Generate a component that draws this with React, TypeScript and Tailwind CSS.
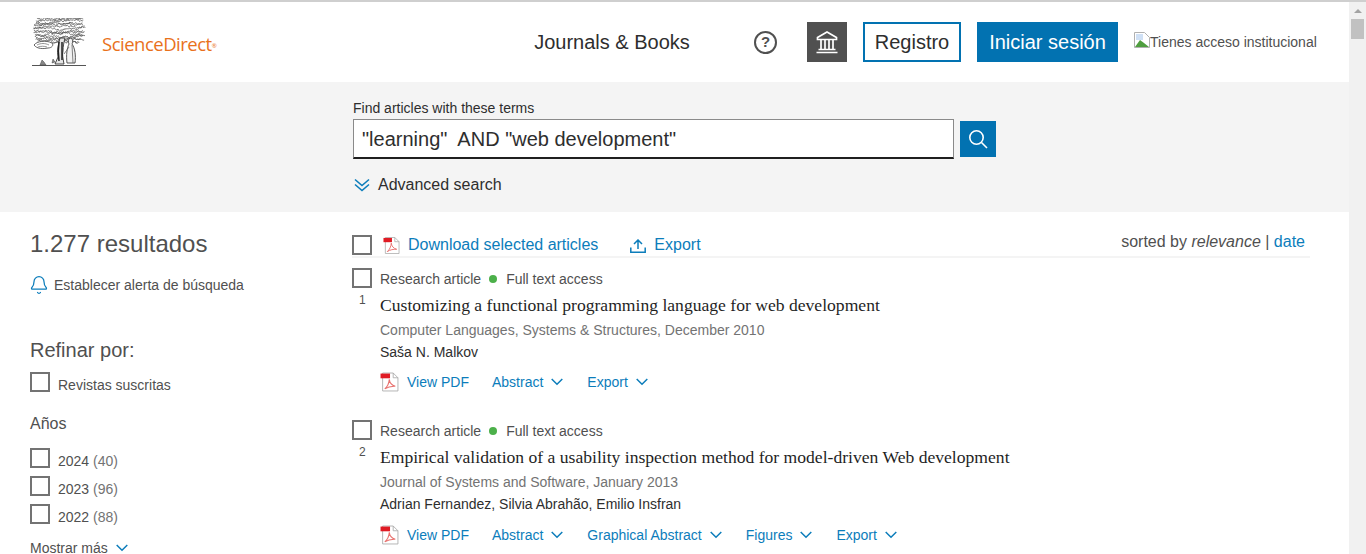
import React from "react";
import { Bell } from "lucide-react";

const sans = "font-['Liberation_Sans',Arial,sans-serif]";

function Box({ className = "" }: { className?: string }) {
  return <span className={`block w-5 h-5 border-2 border-[#737373] bg-white shrink-0 ${className}`} />;
}

function Chevron({ className = "" }: { className?: string }) {
  return (
    <svg width="12" height="8" viewBox="0 0 12 8" fill="none" stroke="#0c7dbb" strokeWidth="1.5" className={`shrink-0 ${className}`}>
      <path d="M.7 1 6 6.300 11.300 1" />
    </svg>
  );
}

function PdfIcon({ w = 18, h = 18 }: { w?: number; h?: number }) {
  return (
    <svg width={w} height={h} viewBox="0 0 18 18" className="shrink-0">
      <path d="M2.500.500h10l4.500 4.500v12.500H2.500z" fill="#fff" stroke="#a8a8a8" strokeWidth="0.8" />
      <path d="M12.500.500v4.500h4.500" fill="none" stroke="#a8a8a8" strokeWidth="0.8" />
      <rect x="0.5" y="1" width="9" height="4.500" fill="#e01b24" />
      <path d="M4.500 15.500c2.500-2 4-5.500 4.300-9 .3 3 2 5.500 5.700 6.500-3.500-.2-7 .5-10 2.500z" fill="none" stroke="#e8716e" strokeWidth="1" />
    </svg>
  );
}

function Tree() {
  const rows: React.ReactNode[] = [];
  let seed = 7;
  const rnd = () => {
    seed = (seed * 9301 + 49297) % 233280;
    return seed / 233280;
  };
  for (let y = 1; y < 28; y += 1.7) {
    const t = Math.abs(y - 12) / 16;
    const inset = Math.max(0, t * t * 7);
    let x = 1 + inset + rnd() * 1.5;
    const end = 52 - inset - rnd() * 1.5;
    let d = `M${x.toFixed(1)} ${y.toFixed(1)}`;
    while (x < end) {
      const step = 1 + rnd() * 1.4;
      const a = (rnd() - 0.5) * 5;
      d += `q${(step / 2).toFixed(1)} ${a.toFixed(1)} ${step.toFixed(1)} ${((rnd() - 0.5) * 1.4).toFixed(1)}`;
      x += step;
    }
    rows.push(<path key={y} d={d} fill="none" stroke="#555" strokeWidth="0.75" />);
  }
  return (
    <svg width="54" height="49" viewBox="0 0 54 49" className="shrink-0">
      {rows}
      <path d="M2 27c3-4 12-5 18-2 2 2 0 5-4 5-5 1-11 1-14-3z" fill="#fff" stroke="#555" strokeWidth="0.9" />
      <path d="M5 27c4-2 8-2 12 0M6 29c3-1 6-1 9 0" fill="none" stroke="#666" strokeWidth="0.7" />
      <path d="M28 20c-2 7-3 13-2 19l-3 7h9c-1-6-2-9-1-13 0-5 1-9 2-13z" fill="#e4e4e4" stroke="#333" strokeWidth="0.9" />
      <path d="M27 24c-1 6-1 12 0 19M30 24v18" stroke="#222" strokeWidth="1.5" fill="none" />
      <path d="M38 20c3 0 3 4 2 6 3 4 4 12 3 19h-8c-1-8 0-15 2-19-1-2-1-5 1-6z" fill="#f2f2f2" stroke="#444" strokeWidth="0.9" />
      <path d="M40 27l1 18M37 29l-5 7" stroke="#666" strokeWidth="0.8" fill="none" />
      <path d="M0 47.500h54" stroke="#555" strokeWidth="1" />
      <path d="M8 47l2-5 2 2 2 3zM20 45l1-4 2 3z" fill="#888" stroke="#444" strokeWidth="0.5" />
    </svg>
  );
}

function Action({ label }: { label: string }) {
  return (
    <span className="flex items-center gap-2 mr-6">
      <span>{label}</span>
      <Chevron />
    </span>
  );
}

function Article({ n, title, source, authors, actions, actionGap }: { n: number; title: string; source: string; authors: string; actions: string[]; actionGap: string }) {
  return (
    <div className="flex">
      <div className="w-7 shrink-0 flex flex-col items-start">
        <Box />
        <span className="text-[12px] leading-[14px] text-[#505050] ml-[7px] mt-[5px]">{n}</span>
      </div>
      <div className="min-w-0">
        <div className="flex items-center text-[14px] leading-[20px] text-[#505050] pt-[1px]">
          <span>Research article</span>
          <span className="w-2 h-2 rounded-full bg-[#4cb04a] ml-2 mr-[9px]" />
          <span>Full text access</span>
        </div>
        <div className="font-['Liberation_Serif',serif] text-[17.6px] leading-[24px] text-[#1f1f1f] mt-[4px] whitespace-nowrap">{title}</div>
        <div className="text-[14px] leading-[20px] text-[#737373] mt-[3px]">{source}</div>
        <div className="text-[14px] leading-[20px] text-[#2e2e2e] mt-[2px]">{authors}</div>
        <div className={`flex items-center text-[14px] text-[#0c7dbb] leading-[20px] ${actionGap}`}>
          <span className="flex items-center gap-2 mr-[23px]"><PdfIcon w={19} h={20} /><span>View PDF</span></span>
          {actions.map((a) => <Action key={a} label={a} />)}
        </div>
      </div>
    </div>
  );
}

function Year({ label, count }: { label: string; count: string }) {
  return (
    <div className="flex items-start h-7">
      <Box />
      <span className="text-[14px] leading-[20px] text-[#505050] ml-2 mt-[3px]">{label} <span className="text-[#737373]">({count})</span></span>
    </div>
  );
}

export default function App() {
  return (
    <div className={`w-[1366px] h-[554px] overflow-hidden bg-white border-t-2 border-[#cfcfcf] flex ${sans}`}>
      <div className="w-[1349px] shrink-0">
        <header className="h-[80px] flex items-center pl-[32px]">
          <Tree />
          <span className="block w-[116px] ml-4 mt-1 font-['Open_Sans',sans-serif] text-[#e9711c] text-[18.5px] tracking-[-0.5px] whitespace-nowrap">ScienceDirect<sup className="text-[6px]">®</sup></span>
          <span className="text-[20px] text-[#2e2e2e] ml-[316px] w-[156px] text-center whitespace-nowrap">Journals &amp; Books</span>
          <span className="ml-[64px] w-[23px] h-[23px] rounded-full border-2 border-[#505050] flex items-center justify-center text-[15px] font-bold text-[#505050]">?</span>
          <span className="ml-[30px] w-[40px] h-[40px] bg-[#505050] flex items-center justify-center">
            <svg width="24" height="24" viewBox="0 0 24 24" fill="none" stroke="#fff" strokeWidth="1.7">
              <path d="M12 2 2.500 7.500v2h19v-2zM3.500 19.500h17M1.500 22.500h21M6 10v9M10 10v9M14 10v9M18 10v9" />
            </svg>
          </span>
          <span className="ml-4 w-[98px] h-[40px] border-2 border-[#0272b1] flex items-center justify-center text-[20px] text-[#2e2e2e]">Registro</span>
          <span className="ml-4 w-[141px] h-[40px] bg-[#0272b1] flex items-center justify-center text-[20px] text-white">Iniciar sesión</span>
          <span className="ml-4 flex items-center text-[14px] text-[#505050] whitespace-nowrap">
            <svg width="16" height="16" viewBox="0 0 16 16" className="shrink-0 -mt-[5px]">
              <path d="M.5.500h10l5 5v10H.5z" fill="#fff" stroke="#b0b0b0" />
              <path d="M2 2h7v6H2z" fill="#cfe0f5" />
              <path d="M1 15l5-7 4 3 5 4z" fill="#4f9e3f" />
            </svg>
            Tienes acceso institucional
          </span>
        </header>
        <section className="h-[130px] bg-[#f4f4f4] pl-[353px] pt-[18px]">
          <div className="text-[14px] leading-[16px] text-[#2e2e2e]">Find articles with these terms</div>
          <div className="flex items-start mt-[3px]">
            <div className="w-[601px] h-[40px] bg-white border border-[#8a8a8a] border-b-2 border-b-[#1f1f1f] pl-[8px] flex items-center text-[20px] text-[#2e2e2e] whitespace-pre">"learning"  AND "web development"</div>
            <span className="w-9 h-9 ml-[6px] mt-[2px] bg-[#0272b1] flex items-center justify-center">
              <svg width="20" height="20" viewBox="0 0 20 20" fill="none" stroke="#fff" strokeWidth="1.6"><circle cx="8.500" cy="8.500" r="6.700" /><path d="M13.500 13.500 19 19" /></svg>
            </span>
          </div>
          <div className="flex items-center mt-[14px] text-[16px] text-[#2e2e2e]">
            <svg width="16" height="14" viewBox="0 0 16 14" fill="none" stroke="#0c7dbb" strokeWidth="1.6" className="shrink-0 ml-[1px]">
              <path d="M1 1.500 8 7.500l7-6M1 6.500l7 6 7-6" />
            </svg>
            <span className="ml-[8px]">Advanced search</span>
          </div>
        </section>
        <div className="flex pl-[30px]">
          <aside className="w-[322px] shrink-0 pt-[18px]">
            <div className="text-[24px] leading-[28px] text-[#505050]">1.277 resultados</div>
            <div className="flex items-center mt-[17px] text-[14px] leading-[20px] text-[#505050]">
              <Bell size={20} color="#0c7dbb" strokeWidth={1.5} className="-ml-[1px]" />
              <span className="ml-[5px]">Establecer alerta de búsqueda</span>
            </div>
            <div className="text-[20px] leading-[24px] text-[#505050] mt-[43px]">Refinar por:</div>
            <div className="flex items-start mt-[10px] h-7">
              <Box />
              <span className="text-[14px] leading-[20px] text-[#505050] ml-2 mt-[3px]">Revistas suscritas</span>
            </div>
            <div className="text-[16px] leading-[20px] text-[#505050] mt-[14px] mb-[14px]">Años</div>
            <Year label="2024" count="40" />
            <Year label="2023" count="96" />
            <Year label="2022" count="88" />
            <div className="flex items-center gap-2 mt-[6px] text-[14px] leading-[20px] text-[#505050]">Mostrar más <Chevron /></div>
          </aside>
          <main className="w-[958px] shrink-0 pt-[22px]">
            <div className="flex items-center border-b-2 border-[#f4f4f4] h-[24px]">
              <Box className="-mt-[1px]" />
              <span className="ml-[11px]"><PdfIcon w={17} h={17} /></span>
              <span className="ml-[8px] text-[16px] text-[#0c7dbb]">Download selected articles</span>
              <svg width="16" height="14" viewBox="0 0 16 14" fill="none" stroke="#0c7dbb" strokeWidth="1.5" className="shrink-0 ml-[32px] mt-[2px]">
                <path d="M.8 8.500v4.700h14.400V8.500M8 10V1.500M4 5l4-4 4 4" />
              </svg>
              <span className="ml-[8px] text-[16px] text-[#0c7dbb]">Export</span>
              <span className="ml-auto mr-[5px] text-[16px] text-[#505050] -mt-[6px]">sorted by <i>relevance</i> | <span className="text-[#0c7dbb]">date</span></span>
            </div>
            <div className="mt-[10px]">
              <Article n={1} actionGap="mt-[10px]" title="Customizing a functional programming language for web development" source="Computer Languages, Systems & Structures, December 2010" authors="Saša N. Malkov" actions={["Abstract", "Export"]} />
            </div>
            <div className="mt-[28px]">
              <Article n={2} actionGap="mt-[11px]" title="Empirical validation of a usability inspection method for model-driven Web development" source="Journal of Systems and Software, January 2013" authors="Adrian Fernandez, Silvia Abrahão, Emilio Insfran" actions={["Abstract", "Graphical Abstract", "Figures", "Export"]} />
            </div>
          </main>
        </div>
      </div>
      <div className="w-[17px] shrink-0 bg-[#f1f1f1] flex flex-col items-center pt-[7px]">
        <span className="w-0 h-0 border-x-[4px] border-x-transparent border-b-[4px] border-b-[#a3a3a3]" />
        <span className="w-[13px] h-[20px] bg-[#c1c1c1] mt-[6px]" />
      </div>
    </div>
  );
}
